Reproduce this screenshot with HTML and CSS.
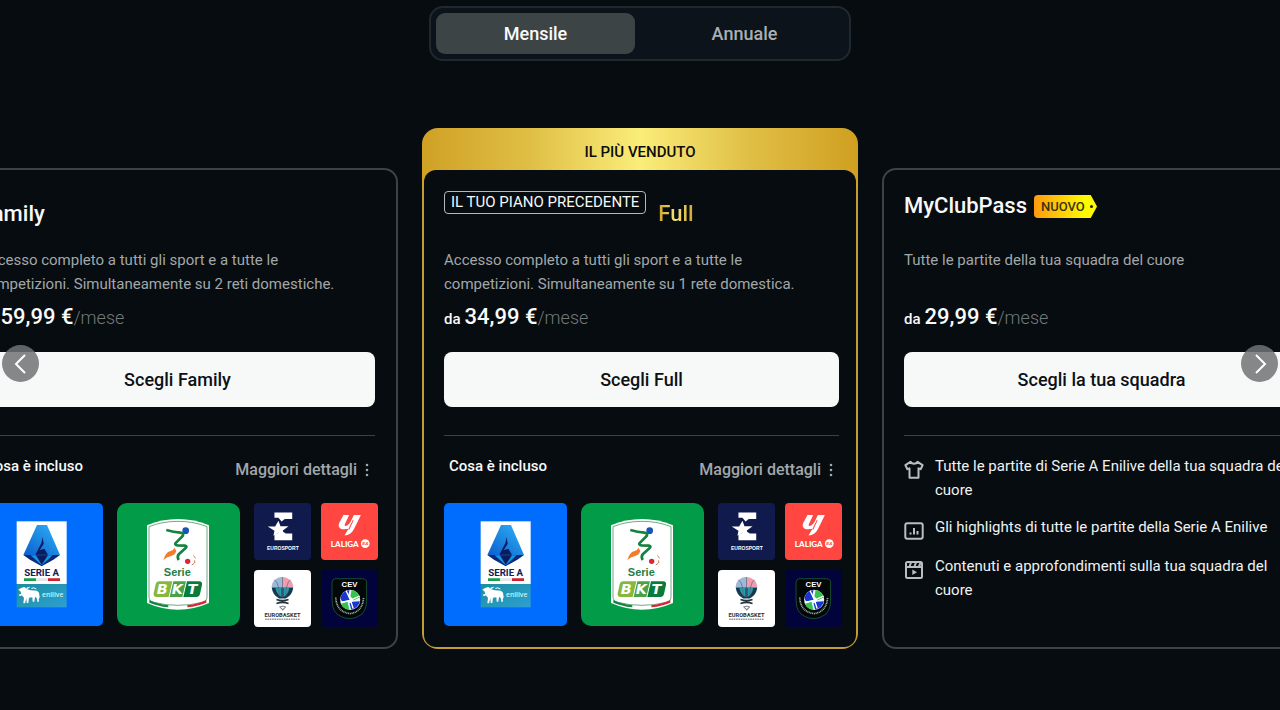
FILE: index.html
```html
<!DOCTYPE html>
<html lang="it">
<head>
<meta charset="utf-8">
<meta name="viewport" content="width=device-width, initial-scale=1">
<title>Scegli il tuo piano</title>
<link rel="stylesheet" href="styles.css">
</head>
<body>
<svg class="defs" aria-hidden="true">
  <defs>
    <linearGradient id="aBlue" x1="0" y1="1" x2="1" y2="0"><stop offset="0" stop-color="#0b5ed0"/><stop offset="1" stop-color="#2fb4f5"/></linearGradient>
    <linearGradient id="eni" x1="0" y1="0" x2="1" y2="1"><stop offset="0" stop-color="#1b8f9d"/><stop offset="1" stop-color="#2f9fd2"/></linearGradient>
    <symbol id="serie-a" viewBox="12 24 369 369">
      <rect x="122" y="79" width="150" height="188" fill="#fff"/>
      <rect x="122" y="267" width="150" height="70" fill="url(#eni)"/>
      <path d="M183 90h30l39 90H142z" fill="url(#aBlue)"/>
      <path d="M142 180h110l-20 14-35 20-35-20z" fill="#0a2a78"/>
      <path d="M164 181h66l-33 30z" fill="#1593e6"/>
      <path d="M180 181h36l-19 28z" fill="#0a1c5e"/>
      <path d="M200 126l3 20-12 20 14-5 11 18h-38l6-12 12-22z" fill="#0a1c5e"/>
      <path d="M144 250h36v8h-36z" fill="#1c9a50"/><path d="M180 250h36v8h-36z" fill="#e4e6e8"/><path d="M216 250h36v8h-36z" fill="#cf1f35"/>
      <path d="M135 279l10-3 8 7 12 3 18 1 6 6 2 14-3 6 1 7h-5l-2-12-5-2-2 14h-5l-1-13-10 1-2 16h-5l-1-14-4 15h-5l2-17-7-7-5 3-4-5 8-3-3-7-6-5zM150 279l10-4 2 2-8 6z" fill="#fff"/>
      <path d="M166 280q8-4 15 2" fill="none" stroke="#fff" stroke-width="3"/>
    </symbol>
    <symbol id="serie-bkt" viewBox="9 24 369 369">
      <path d="M99 91q45-19 93-19t93 19v233q-45 20-93 20t-93-20z" fill="#fff"/>
      <path d="M105 95q40-16 87-16t87 16v210q0 14-14 17-35 9-73 9t-73-9q-14-3-14-17z" fill="none" stroke="#287d4b" stroke-width="2"/>
      <path d="M106 315q24 12 57 16v6q-34-4-57-14z" fill="#168442"/><path d="M277 315q-24 12-57 16v6q34-4 57-14z" fill="#d72731"/>
      <circle cx="215" cy="107" r="10" fill="#1555b5"/>
      <path d="M157 105q22 6 42 8 12 2 7 10l-22 22q-2 5 6 6l24 1q6 2 1 7l-20 18q-7 7-1 18" fill="none" stroke="#15823f" stroke-width="8" stroke-linejoin="round"/>
      <path d="M181 158l6 10q-3 12-16 15-13 3-23 12l5-13q8-13 17-14 8-1 11-10z" fill="#f07d2c"/>
      <circle cx="221" cy="199" r="8" fill="#dc2435"/>
      <path d="M238 182q5 3 6 8m-2 6v8m-9 6 8-5" fill="none" stroke="#dc7a55" stroke-width="3"/>
      <path d="M136 259h39l-11 47h-36q-11 0-9-11l6-27q2-9 11-9z" fill="#86b83e"/>
      <path d="M178 259h38l-11 47h-38z" fill="#49a246"/>
      <path d="M219 259h36q11 0 9 11l-6 27q-2 9-11 9h-39z" fill="#0b7b3d"/>
    </symbol>
    <symbol id="eurosport" viewBox="24 24 170 170">
      <path d="M85 52h53v20h-22l-10 7-9-11H85zM85 134v-16l14-6 9-4 11 7h19v20H85z" fill="#fff"/>
      <path d="M97 77l6 16h24l-17 13 4 16-17-9-15 9 3-15-20-13h22z" fill="#fff"/>
    </symbol>
    <symbol id="laliga" viewBox="225 24 170 170">
      <path d="M292 60h17l-13 28q-2 7 7 3 7-4 10-10l10-21h21l-21 42q-9 18-28 19l12-20q-24 5-29-7-1-5 2-12z" fill="#fff"/>
      <path d="M312 61l-15 30M321 75l-13 28" stroke="#ff4640" stroke-width="3"/>
      <circle cx="357" cy="145" r="13" fill="#fff"/>
    </symbol>
    <symbol id="eurobasket" viewBox="24 223 170 170">
      <path d="M77 275a32 31 0 0 1 64 0z" fill="#ee9eaf"/><path d="M77 275a32 31 0 0 1 32-31v31z" fill="#9cbbd8"/>
      <path d="M77 275h64q-2 22-22 33H99q-20-11-22-33z" fill="#14394b"/>
      <path d="M88 277h18v27q-15-8-18-27zM112 277h17q-2 18-17 27z" fill="#249bad"/>
      <path d="M109 244v60M85 252q15 12 14 50M133 252q-15 12-14 50" fill="none" stroke="#55627d" stroke-width="2"/>
      <path d="M91 311q18 7 36 0m-36 12q18-7 36 0" fill="none" stroke="#26343d" stroke-width="5"/>
      <path d="M101 333q8-4 17 0l-8 9z" fill="none" stroke="#7b858b" stroke-width="3"/>
    </symbol>
    <symbol id="cev" viewBox="225 223 170 170">
      <path d="M270 249h79q12 0 12 12v52q0 38-26 49-25 12-50 0-27-11-27-49v-52q0-12 12-12z" fill="#020708" stroke="#24713c" stroke-width="2"/>
      <circle cx="312" cy="312" r="30" fill="#e9f6f4"/>
      <path d="M284 302q8-17 26-19l-4 16 6 14-24 4q-6-7-4-15zM320 318l21-2q-5 20-26 25l-5-18z" fill="#1937cf"/>
      <path d="M316 283q19 3 25 21l-18 9-10-12zM284 324l20-6 6 24q-18-2-26-18z" fill="#35c44c"/>
      <path d="M300 285l13 28 27-12M284 320l29-7 8 25" fill="none" stroke="#fff" stroke-width="4"/>
      <path d="M269 305q2 43 43 48 37-5 40-48" fill="none" stroke="#a2b1a7" stroke-width="5" stroke-dasharray="3 2"/>
    </symbol>
    <symbol id="dots" viewBox="0 0 4 14"><circle cx="2" cy="2" r="1.3"/><circle cx="2" cy="7" r="1.3"/><circle cx="2" cy="12" r="1.3"/></symbol>
  </defs>
</svg>

<main class="page">
  <div class="toggle" role="group" aria-label="Fatturazione">
    <button type="button" class="toggle-option is-selected" aria-pressed="true">Mensile</button>
    <button type="button" class="toggle-option" aria-pressed="false">Annuale</button>
  </div>

  <section class="carousel" aria-label="Piani">
    <article class="card card-start">
      <header class="card-head"><h2 class="plan plan-low">Family</h2></header>
      <p class="desc">Accesso completo a tutti gli sport e a tutte le competizioni. Simultaneamente su 2 reti domestiche.</p>
      <p class="price"><span class="from">da</span> <strong class="amount">59,99 €</strong><span class="per">/mese</span></p>
      <button type="button" class="choose">Scegli Family</button>
      <div class="included">
        <div class="included-head"><h3 class="included-title">Cosa è incluso</h3><a class="details" href="#dettagli-family">Maggiori dettagli <svg class="dots"><use href="#dots"/></svg></a></div>
        <div class="tiles">
          <svg class="tile blue" viewBox="12 24 369 369"><use href="#serie-a" x="12" y="24" width="369" height="369"/><text x="197" y="243" class="t-seriea">SERIE A</text><text x="230" y="307" class="t-eni">enilive</text></svg>
          <svg class="tile green" viewBox="9 24 369 369"><use href="#serie-bkt" x="9" y="24" width="369" height="369"/><text x="190" y="244" class="t-serie">Serie</text><text x="145 190 235" y="298" class="t-bkt">BKT</text></svg>
          <div class="minis">
            <svg class="mini navy" viewBox="24 24 170 170"><use href="#eurosport" x="24" y="24" width="170" height="170"/><text x="110" y="164" class="t-euro">EUROSPORT</text></svg>
            <svg class="mini red" viewBox="225 24 170 170"><use href="#laliga" x="225" y="24" width="170" height="170"/><text x="296" y="154" class="t-liga">LALIGA</text><text x="357" y="150" class="t-ea">EA</text></svg>
            <svg class="mini white" viewBox="24 223 170 170"><use href="#eurobasket" x="24" y="223" width="170" height="170"/><text x="109" y="362" class="t-basket">EUROBASKET</text><path class="fine" d="M57 370h103"/></svg>
            <svg class="mini night" viewBox="225 223 170 170"><use href="#cev" x="225" y="223" width="170" height="170"/><text x="310" y="275" class="t-cev">CEV</text></svg>
          </div>
        </div>
      </div>
    </article>

    <div class="best">
      <p class="best-label">IL PIÙ VENDUTO</p>
      <article class="card card-best">
        <header class="card-head"><span class="previous">IL TUO PIANO PRECEDENTE</span><h2 class="plan plan-low plan-gold">Full</h2></header>
        <p class="desc">Accesso completo a tutti gli sport e a tutte le competizioni. Simultaneamente su 1 rete domestica.</p>
        <p class="price"><span class="from">da</span> <strong class="amount">34,99 €</strong><span class="per">/mese</span></p>
        <button type="button" class="choose">Scegli Full</button>
        <div class="included">
          <div class="included-head"><h3 class="included-title">Cosa è incluso</h3><a class="details" href="#dettagli-full">Maggiori dettagli <svg class="dots"><use href="#dots"/></svg></a></div>
          <div class="tiles">
            <svg class="tile blue" viewBox="12 24 369 369"><use href="#serie-a" x="12" y="24" width="369" height="369"/><text x="197" y="243" class="t-seriea">SERIE A</text><text x="230" y="307" class="t-eni">enilive</text></svg>
            <svg class="tile green" viewBox="9 24 369 369"><use href="#serie-bkt" x="9" y="24" width="369" height="369"/><text x="190" y="244" class="t-serie">Serie</text><text x="145 190 235" y="298" class="t-bkt">BKT</text></svg>
            <div class="minis">
              <svg class="mini navy" viewBox="24 24 170 170"><use href="#eurosport" x="24" y="24" width="170" height="170"/><text x="110" y="164" class="t-euro">EUROSPORT</text></svg>
              <svg class="mini red" viewBox="225 24 170 170"><use href="#laliga" x="225" y="24" width="170" height="170"/><text x="296" y="154" class="t-liga">LALIGA</text><text x="357" y="150" class="t-ea">EA</text></svg>
              <svg class="mini white" viewBox="24 223 170 170"><use href="#eurobasket" x="24" y="223" width="170" height="170"/><text x="109" y="362" class="t-basket">EUROBASKET</text><path class="fine" d="M57 370h103"/></svg>
              <svg class="mini night" viewBox="225 223 170 170"><use href="#cev" x="225" y="223" width="170" height="170"/><text x="310" y="275" class="t-cev">CEV</text></svg>
            </div>
          </div>
        </div>
      </article>
    </div>

    <article class="card">
      <header class="card-head"><h2 class="plan">MyClubPass</h2><span class="new">NUOVO</span></header>
      <p class="desc">Tutte le partite della tua squadra del cuore</p>
      <p class="price"><span class="from">da</span> <strong class="amount">29,99 €</strong><span class="per">/mese</span></p>
      <button type="button" class="choose">Scegli la tua squadra</button>
      <ul class="included features">
        <li class="feature"><svg class="icon" viewBox="0 0 20 20"><path d="M6.5 1.8 1.4 5.2l2 4 2.1-.9v9.500h9V8.300l2.100.9 2-4-5.100-3.400q-1 2-3.500 2t-3.500-2z"/></svg><span>Tutte le partite di Serie A Enilive della tua squadra del cuore</span></li>
        <li class="feature"><svg class="icon" viewBox="0 0 20 20"><rect x="1.300" y="2.200" width="17.400" height="15.600" rx="2"/><path d="M6.500 11.500v2M10 7v6.500M13.500 10v3.500"/></svg><span>Gli highlights di tutte le partite della Serie A Enilive</span></li>
        <li class="feature"><svg class="icon" viewBox="0 0 20 20"><rect x="2" y="2" width="16" height="16" rx="1.500"/><path d="M2 7h16M7 2.500 5.500 6.500M12 2.500l-1.500 4M16.500 3 15 6.500"/><path class="solid" d="M8.300 9.500 13 12.300l-4.700 2.800z"/></svg><span>Contenuti e approfondimenti sulla tua squadra del cuore</span></li>
      </ul>
    </article>

    <button type="button" class="arrow arrow-prev" aria-label="Precedente"><svg class="chevron" viewBox="0 0 20 20"><path d="m14 1-9 9 9 9"/></svg></button>
    <button type="button" class="arrow arrow-next" aria-label="Successivo"><svg class="chevron" viewBox="0 0 20 20"><path d="m6 1 9 9-9 9"/></svg></button>
  </section>
</main>
</body>
</html>
```
FILE: styles.css
```css
* { box-sizing: border-box; }

body {
  margin: 0;
  min-height: 100vh;
  background: #070c10;
  color: #f7f9f9;
  font-family: Roboto, "Liberation Sans", sans-serif;
  font-size: 15px;
  line-height: 24px;
}

h2, h3, p, ul { margin: 0; padding: 0; }
ul { list-style: none; }
button { font: inherit; border: 0; padding: 0; cursor: pointer; }
.defs { position: absolute; width: 0; height: 0; }

.page { padding: 6px 0 60px; }

.toggle {
  display: grid;
  grid-template-columns: 1fr 1fr;
  gap: 10px;
  width: 100%;
  max-width: 422px;
  margin: 0 auto 67px;
  padding: 5px;
  border: 2px solid #20292e;
  border-radius: 14px;
  background: #0c131a;
}
.toggle-option {
  height: 41px;
  border-radius: 9px;
  background: transparent;
  color: #a9afb3;
  font-size: 18px;
  font-weight: 500;
}
.toggle-option.is-selected { background: #3d4446; color: #f9fafa; }

.carousel {
  position: relative;
  display: flex;
  justify-content: center;
  align-items: flex-end;
  gap: 24px;
  overflow: hidden;
}
.card {
  flex: none;
  width: 436px;
  min-height: 481px;
  padding: 0 17px 21px 20px;
  border: 2px solid #3d4245;
  border-radius: 14px;
  background: #070c10;
}
.card-start { padding: 0 21px 21px 16px; }

.best {
  flex: none;
  padding: 0 2px 2px;
  border-radius: 16px;
  background:
    linear-gradient(#c49b34, #c49b34) bottom / 100% calc(100% - 60px) no-repeat,
    linear-gradient(90deg, #cfa125, #e0bf46 25%, #faed79 50%, #e0bf46 75%, #cf9f20);
}
.best-label {
  padding: 12px 0 6px;
  color: #0c0d0a;
  font-weight: 500;
  text-align: center;
}
.card-best { width: 432px; min-height: 477px; border: 0; border-radius: 12px; }

.card-head {
  display: flex;
  align-items: flex-start;
  min-height: 78px;
  padding-top: 21px;
}
.plan { font-size: 22px; line-height: 30px; font-weight: 500; }
.plan-low { padding-top: 8px; }
.plan-gold {
  background: linear-gradient(90deg, #cfa12a, #f7e878 50%, #cfa12a);
  background-clip: text;
  -webkit-background-clip: text;
  color: transparent;
}
.previous {
  margin-right: 12px;
  padding: 0 6px;
  border: 1px solid #b4b8ba;
  border-radius: 4px;
  line-height: 21px;
}
.new {
  position: relative;
  margin: 4px 0 0 7px;
  width: 63px;
  padding: 1px 0 0 7px;
  border-radius: 4px 0 0 4px;
  background: linear-gradient(90deg, #ff9a10, #fffa00 80%);
  clip-path: polygon(0 0, 90% 0, 100% 50%, 90% 100%, 0 100%);
  color: #3b3410;
  font-size: 13px;
  font-weight: 500;
  line-height: 22px;
}
.new::after {
  content: "";
  position: absolute;
  top: 10px;
  right: 4px;
  width: 3px;
  height: 3px;
  border-radius: 50%;
  background: #26240a;
}

.desc { min-height: 48px; padding-right: 32px; color: #a2a7aa; }
.price {
  display: flex;
  align-items: baseline;
  height: 42px;
  margin-bottom: 14px;
  color: #f9fafa;
  line-height: 42px;
}
.from { margin-right: 4px; font-weight: 500; }
.amount { font-size: 22px; font-weight: 500; }
.per { color: #74797c; font-size: 18px; font-weight: 300; }
.choose {
  display: block;
  width: 100%;
  height: 55px;
  border-radius: 8px;
  background: #f7f9f9;
  color: #0c1115;
  font-size: 18px;
  font-weight: 500;
}

.included { margin-top: 28px; border-top: 1px solid #3d4245; }
.included-head {
  display: flex;
  justify-content: space-between;
  align-items: flex-start;
  padding: 18px 6px 21px 5px;
}
.included-title { font-size: 15px; font-weight: 500; }
.details {
  display: flex;
  align-items: center;
  gap: 8px;
  padding-top: 4px;
  color: #a2a7aa;
  font-size: 16px;
  font-weight: 500;
  text-decoration: none;
}
.dots { width: 4px; height: 14px; fill: #a2a7aa; }

.tiles { display: flex; gap: 14px; margin-right: -3px; }
.tile { flex: none; width: 123px; height: 123px; border-radius: 5px; }
.minis { display: grid; grid-template-columns: 57px 57px; gap: 10px; height: 123px; }
.mini { width: 57px; height: 57px; border-radius: 4px; }
.blue { background: #006dff; }
.green { background: #029b48; border-radius: 10px; }
.navy { background: #111a4c; }
.red { background: #ff4640; }
.white { background: #fff; }
.night { background: #02033a; }

.tile text, .mini text { text-anchor: middle; font-family: "Liberation Sans", sans-serif; font-weight: 700; fill: #fff; }
.tile .t-seriea { font-family: Roboto, sans-serif; font-size: 29px; fill: #142057; }
.tile .t-eni { font-family: "Noto Sans", sans-serif; font-size: 20px; font-weight: 600; fill: #c9edf0; }
.tile .t-serie { font-size: 33px; fill: #237d49; }
.tile .t-bkt { font-family: "DejaVu Sans", sans-serif; font-size: 43px; font-style: italic; }
.mini .t-euro { font-size: 15px; }
.mini .t-liga { font-family: Lato, sans-serif; font-size: 24px; font-weight: 900; }
.mini .t-ea { font-size: 13px; font-style: italic; fill: #ff4640; }
.mini .t-basket { font-family: Roboto, sans-serif; font-size: 17px; fill: #26343d; }
.mini .t-cev { font-size: 23px; }
.fine { stroke: #8f969a; stroke-width: 4; stroke-dasharray: 5 2; }

.features { display: grid; gap: 13px; padding-top: 18px; }
.feature { display: flex; gap: 11px; color: #f0f2f2; }
.icon {
  flex: none;
  width: 20px;
  height: 20px;
  margin-top: 6px;
  fill: none;
  stroke: #b9bec1;
  stroke-width: 2;
  stroke-linejoin: round;
}
.solid { fill: #b9bec1; stroke: none; }

.arrow {
  position: absolute;
  top: 217px;
  display: grid;
  place-items: center;
  width: 37px;
  height: 37px;
  border-radius: 50%;
  background: rgba(112, 116, 118, 0.85);
}
.arrow-prev { left: 2px; }
.arrow-next { right: 2px; }
.chevron { width: 20px; height: 20px; fill: none; stroke: #fff; stroke-width: 2; }
```
